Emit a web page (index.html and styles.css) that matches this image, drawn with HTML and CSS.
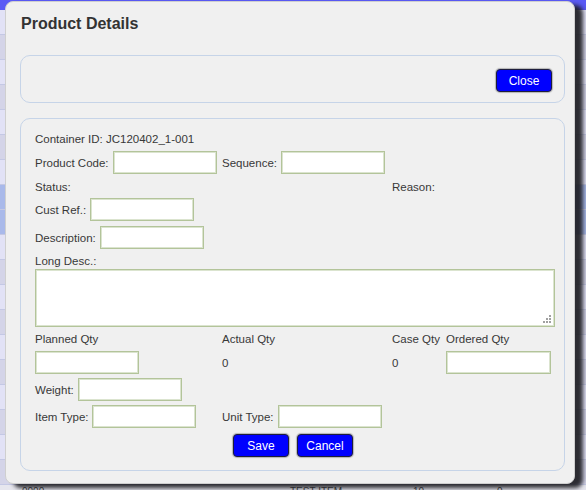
FILE: index.html
```html
<!DOCTYPE html>
<html lang="en">
<head>
    <meta charset="UTF-8">
    <meta name="viewport" content="width=device-width, initial-scale=1.0">
    <title>Product Details</title>
    <link rel="stylesheet" href="styles.css">
</head>
<body>
    <!-- the container list behind the popup -->
    <div class="page">
        <div class="page-bar"></div>
        <div class="page-row"></div>
        <div class="page-row alt"></div>
        <div class="page-row"></div>
        <div class="page-row alt"></div>
        <div class="page-row"></div>
        <div class="page-row alt"></div>
        <div class="page-row"></div>
        <div class="page-row selected"></div>
        <div class="page-row selected"></div>
        <div class="page-row"></div>
        <div class="page-row alt"></div>
        <div class="page-row"></div>
        <div class="page-row alt"></div>
        <div class="page-row"></div>
        <div class="page-row alt"></div>
        <div class="page-row"></div>
        <div class="page-row alt"></div>
        <div class="page-row"></div>
        <div class="page-row alt"></div>
        <div class="page-row data">
            <span>0000</span>
            <span>TEST ITEM</span>
            <span>10</span>
            <span>0</span>
        </div>
    </div>

    <div class="dialog">
        <h2 class="dialog-title">Product Details</h2>

        <div class="panel panel-top">
            <button class="btn">Close</button>
        </div>

        <div class="panel panel-form">
            <div class="line">Container ID: JC120402_1-001</div>

            <div class="cols form-row">
                <div class="field"><label>Product Code:</label><input type="text"></div>
                <div class="field"><label>Sequence:</label><input type="text"></div>
            </div>

            <div class="cols form-row loose line">
                <span>Status:</span>
                <span></span>
                <span class="span2">Reason:</span>
            </div>

            <div class="field form-row tight"><label>Cust Ref.:</label><input type="text"></div>
            <div class="field form-row"><label>Description:</label><input type="text"></div>

            <div class="line form-row">Long Desc.:</div>
            <div class="area-wrap">
                <textarea class="long-desc"></textarea>
                <svg class="grip" width="10" height="10" viewBox="0 0 10 10">
                    <rect x="7" y="1" width="2" height="2" fill="#a0a0a0"/>
                    <rect x="4" y="4" width="2" height="2" fill="#a0a0a0"/>
                    <rect x="7" y="4" width="2" height="2" fill="#a0a0a0"/>
                    <rect x="1" y="7" width="2" height="2" fill="#a0a0a0"/>
                    <rect x="4" y="7" width="2" height="2" fill="#a0a0a0"/>
                    <rect x="7" y="7" width="2" height="2" fill="#a0a0a0"/>
                </svg>
            </div>

            <div class="cols form-row line">
                <span>Planned Qty</span>
                <span>Actual Qty</span>
                <span>Case Qty</span>
                <span>Ordered Qty</span>
            </div>
            <div class="cols form-row">
                <input type="text">
                <span>0</span>
                <span>0</span>
                <input type="text" class="wide">
            </div>

            <div class="field form-row tight"><label>Weight:</label><input type="text"></div>

            <div class="cols form-row tight">
                <div class="field"><label>Item Type:</label><input type="text"></div>
                <div class="field"><label>Unit Type:</label><input type="text"></div>
            </div>

            <div class="actions form-row loose">
                <button class="btn">Save</button>
                <button class="btn">Cancel</button>
            </div>
        </div>
    </div>
</body>
</html>
```

FILE: styles.css
```css
body {
    margin: 0;
    height: 490px;
    overflow: hidden;
    font-family: "Liberation Sans", Arial, sans-serif;
    font-size: 11.5px;
    color: #383838;
    background-color: #dcdcf0;
}

/* background list */
.page-bar {
    height: 10px;
    background-color: #5a5af5;
}

.page-row {
    height: 24px;
    background-color: #e2e2f6;
    border-bottom: 1px solid #c4c8e4;
}

.page-row.alt {
    background-color: #d4d4e8;
}

.page-row.selected {
    background-color: #a9b9ea;
}

.page-row.data {
    display: grid;
    grid-template-columns: 268px 123px 84px 1fr;
    padding: 1px 0 0 22px;
    background-color: #e6e6ee;
    color: #444;
    font-size: 10px;
    line-height: 12px;
}

/* popup */
.dialog {
    position: absolute;
    left: 5px;
    top: 1px;
    width: 568px;
    height: 481px;
    background-color: #f0f0f0;
    border: 1px solid #cfcfcf;
    border-radius: 8px;
    box-shadow: 8px 4px 4px rgba(25, 25, 30, 0.9);
}

.dialog-title {
    margin: 0;
    padding: 12px 15px 0;
    font-size: 16px;
    line-height: 20px;
    font-weight: bold;
    color: #333;
}

.panel {
    box-sizing: border-box;
    margin: 0 9px 0 14px;
    border: 1px solid #c6d4e8;
    border-radius: 10px;
}

.panel-top {
    margin-top: 21px;
    height: 48px;
    display: flex;
    justify-content: flex-end;
    padding: 13px 12px 0;
}

.panel-form {
    margin-top: 15px;
    height: 353px;
    padding: 13px 9px 0 14px;
}

.line {
    line-height: 14px;
}

.form-row {
    margin-top: 5px;
}

.form-row.tight {
    margin-top: 4px;
}

.form-row.loose {
    margin-top: 6px;
}

.cols {
    display: grid;
    grid-template-columns: 187px 170px 54px 1fr;
    align-items: center;
}

.field {
    display: flex;
    align-items: center;
    gap: 4px;
}

input,
textarea {
    box-sizing: border-box;
    margin: 0;
    background-color: #fff;
    border: 1px solid #b3c49a;
    box-shadow: inset 0 0 0 1px #dbe4cf;
    font-family: inherit;
    font-size: 12px;
    outline: none;
}

input {
    width: 104px;
    height: 23px;
}

input.wide {
    width: 105px;
}

.area-wrap {
    position: relative;
    margin-top: 1px;
    width: 520px;
    height: 58px;
}

.long-desc {
    display: block;
    width: 520px;
    height: 58px;
    resize: none;
}

.grip {
    position: absolute;
    right: 3px;
    bottom: 3px;
}

.actions {
    display: flex;
    justify-content: center;
    gap: 8px;
    padding-right: 4px;
}

.btn {
    width: 56px;
    height: 23px;
    padding: 0;
    background-color: #0000ff;
    color: white;
    border: 1px solid #1e1e3c;
    border-radius: 4px;
    box-shadow: 0 0 1px 1px rgba(0, 0, 0, 0.25);
    font-family: "Liberation Sans", Arial, sans-serif;
    font-size: 12px;
    cursor: pointer;
}
```
